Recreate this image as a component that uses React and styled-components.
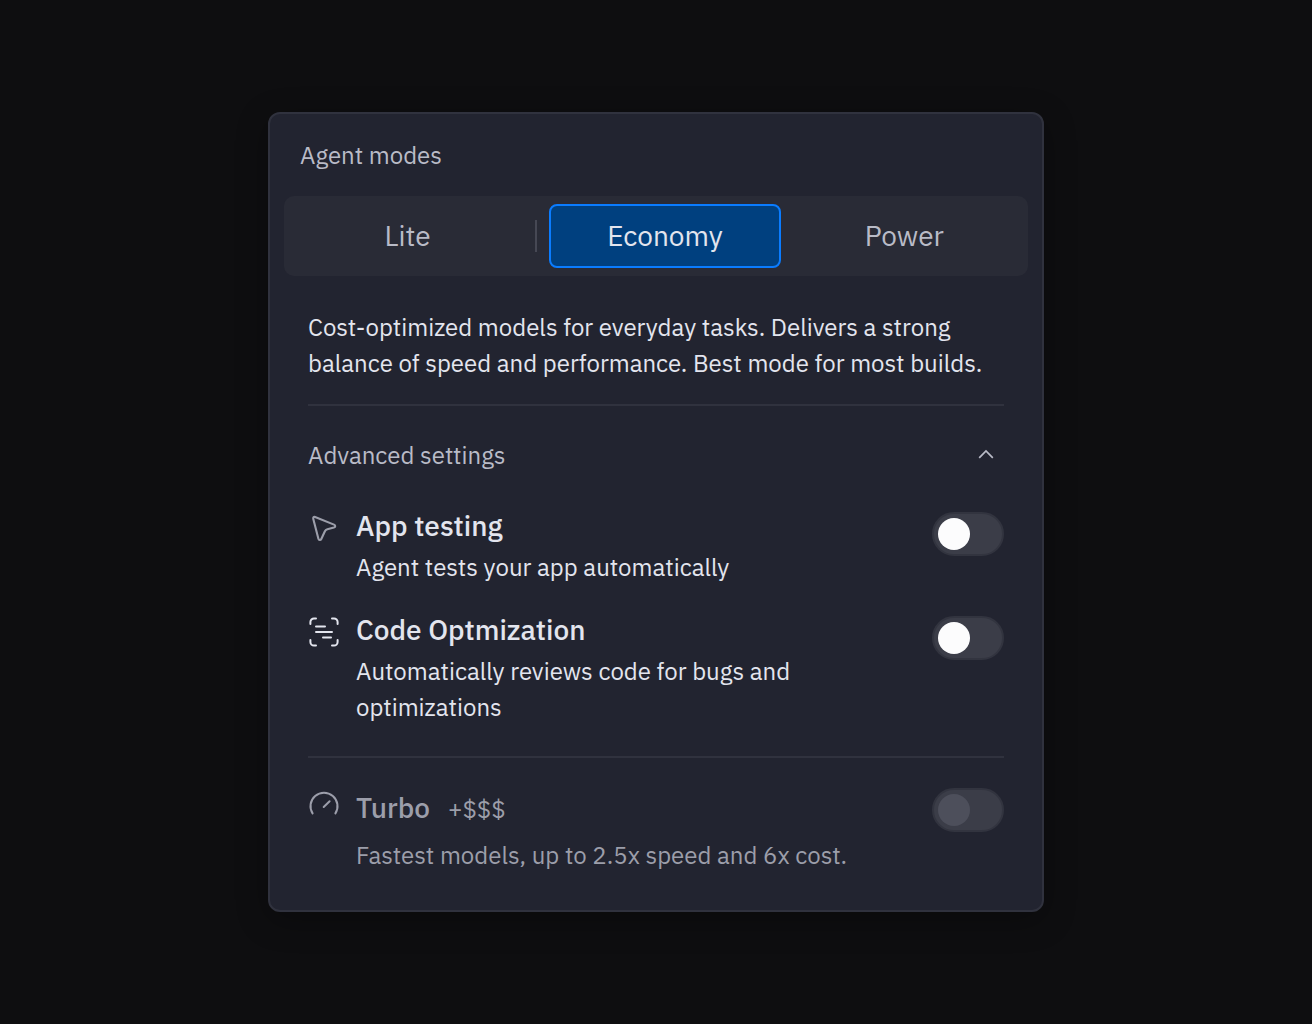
import React, { useState } from "react";
import styled, { createGlobalStyle } from "styled-components";

const GlobalStyle = createGlobalStyle`
  * {
    box-sizing: border-box;
  }

  body {
    margin: 0;
    background: #0e0e10;
    color: #e3e5ee;
    font-family: "IBM Plex Sans", Roboto, sans-serif;
    font-size: 24px;
    line-height: 36px;
  }

  h2, h3, p {
    margin: 0;
    font-size: inherit;
    font-weight: 400;
  }
`;

const Page = styled.main`
  display: flex;
  justify-content: center;
  padding: 112px 24px;
`;

const Card = styled.section`
  width: 100%;
  max-width: 776px;
  padding: 23px 14px 37px;
  background: #222430;
  border: 2px solid #30323e;
  border-radius: 12px;
  box-shadow: 0 8px 32px rgba(0, 0, 0, 0.3);
`;

const CardTitle = styled.h2`
  padding: 0 16px;
  color: #b9bbc7;
`;

const Segments = styled.div`
  display: flex;
  align-items: center;
  margin-top: 23px;
  padding: 8px;
  background: #292b36;
  border-radius: 10px;
`;

const Segment = styled.button`
  flex: 1 1 0;
  height: 64px;
  padding: 0;
  border: 2px solid ${(props) => (props.$active ? "#0a7cff" : "transparent")};
  border-radius: 8px;
  background: ${(props) => (props.$active ? "#00407f" : "transparent")};
  color: ${(props) => (props.$active ? "#e3e5ee" : "#b9bbc7")};
  font-family: inherit;
  font-size: 28px;
  line-height: 36px;
  cursor: pointer;
`;

const SegmentDivider = styled.span`
  width: 2px;
  height: 32px;
  margin: 0 12px;
  background: #464854;
`;

const SegmentGap = styled.span`
  width: 8px;
`;

const Content = styled.div`
  padding: 33px 24px 0;
`;

const Divider = styled.hr`
  height: 2px;
  margin: ${(props) => props.$top}px 0 0;
  border: 0;
  background: #30323e;
`;

const AdvancedButton = styled.button`
  display: flex;
  align-items: center;
  justify-content: space-between;
  width: 100%;
  margin-top: 31px;
  padding: 0 8px 0 0;
  border: 0;
  background: transparent;
  color: #b9bbc7;
  font: inherit;
  text-align: left;
  cursor: pointer;
`;

const Row = styled.div`
  display: grid;
  grid-template-columns: 32px minmax(0, 1fr) 72px;
  column-gap: 16px;
  margin-top: ${(props) => props.$top}px;
  color: ${(props) => (props.$muted ? "#9c9eaa" : "#e3e5ee")};
`;

const IconBox = styled.span`
  display: flex;
  height: 40px;
  align-items: center;
  color: ${(props) => props.$color};
`;

const RowText = styled.div`
  max-width: 500px;
`;

const RowTitle = styled.label`
  display: block;
  padding-top: ${(props) => (props.$roomy ? 6 : 0)}px;
  margin-bottom: ${(props) => (props.$roomy ? 10 : 5)}px;
  font-size: 28px;
  font-weight: 500;
`;

const Price = styled.span`
  margin-left: 18px;
  font-size: 24px;
  font-weight: 400;
`;

const Switch = styled.input`
  appearance: none;
  display: block;
  width: 72px;
  height: 44px;
  margin: 4px 0 0;
  padding: 4px;
  border: 2px solid #32343f;
  border-radius: 22px;
  background: #3b3d48;
  cursor: pointer;

  &::before {
    content: "";
    display: block;
    width: 32px;
    height: 32px;
    border-radius: 50%;
    background: #fcfcfd;
  }

  &:checked {
    background: #0a7cff;
  }

  &:checked::before {
    margin-left: 28px;
  }

  &:disabled {
    cursor: default;
  }

  &:disabled::before {
    background: #4d4f5b;
  }
`;

const CursorIcon = () => (
  <svg width="32" height="32" viewBox="0 0 32 32" fill="none" stroke="currentColor" strokeWidth="2.1" strokeLinejoin="round">
    <path d="M7.1 5L26 12.6C27.7 13.3 27.6 15 25.9 15.5L19.4 17.2C18.2 17.6 17.4 18.2 16.9 19.3L13.3 27C12.6 28.5 10.8 28.4 10.4 26.7L5.3 7C4.9 5.5 5.7 4.5 7.1 5Z" />
  </svg>
);

const ScanIcon = () => (
  <svg width="32" height="32" viewBox="0 0 32 32" fill="none" stroke="currentColor" strokeWidth="2" strokeLinecap="round">
    <path d="M2.4 8V6a3.6 3.6 0 0 1 3.6-3.6h2M24 2.4h2a3.6 3.6 0 0 1 3.6 3.6v2M29.6 24v2a3.6 3.6 0 0 1-3.6 3.6h-2M8 29.6H6a3.6 3.6 0 0 1-3.6-3.6v-2" />
    <path d="M8 10.6h9M8 16h16M15 21.4h8" />
  </svg>
);

const GaugeIcon = () => (
  <svg width="32" height="32" viewBox="0 0 32 32" fill="none" stroke="currentColor" strokeWidth="2" strokeLinecap="round">
    <path d="M4.6 25.4A13.5 13.5 0 1 1 27.4 25.4" />
    <path d="M15.7 19L21.6 13.2" />
  </svg>
);

const ChevronIcon = ({ open }) => (
  <svg width="20" height="20" viewBox="0 0 20 20" fill="none" stroke="currentColor" strokeWidth="1.7">
    <path d={open ? "M3.2 12.8L10 6L16.8 12.8" : "M3.2 6L10 12.8L16.8 6"} />
  </svg>
);

const Setting = ({ id, icon, iconColor, title, desc, top, muted, price }) => {
  const [on, setOn] = useState(false);

  return (
    <Row $top={top} $muted={muted}>
      <IconBox $color={iconColor}>{icon}</IconBox>
      <RowText>
        <RowTitle htmlFor={id} $roomy={!!price}>
          {title}
          {price && <Price>{price}</Price>}
        </RowTitle>
        <p>{desc}</p>
      </RowText>
      <Switch
        id={id}
        type="checkbox"
        role="switch"
        checked={on}
        disabled={muted}
        onChange={(e) => setOn(e.target.checked)}
      />
    </Row>
  );
};

export default function App() {
  const [mode, setMode] = useState("Economy");
  const [open, setOpen] = useState(true);

  const renderSegment = (name) => (
    <Segment type="button" $active={mode === name} aria-pressed={mode === name} onClick={() => setMode(name)}>
      {name}
    </Segment>
  );

  return (
    <>
      <GlobalStyle />
      <Page>
        <Card>
          <CardTitle>Agent modes</CardTitle>
          <Segments>
            {renderSegment("Lite")}
            <SegmentDivider />
            {renderSegment("Economy")}
            <SegmentGap />
            {renderSegment("Power")}
          </Segments>
          <Content>
            <p>
              Cost-optimized models for everyday tasks. Delivers a strong balance of speed and
              performance. Best mode for most builds.
            </p>
            <Divider $top={23} />
            <AdvancedButton type="button" aria-expanded={open} onClick={() => setOpen(!open)}>
              Advanced settings
              <ChevronIcon open={open} />
            </AdvancedButton>
            {open && (
              <>
                <Setting
                  id="app-testing"
                  top={35}
                  icon={<CursorIcon />}
                  iconColor="#9c9eaa"
                  title="App testing"
                  desc="Agent tests your app automatically"
                />
                <Setting
                  id="code-optimization"
                  top={27}
                  icon={<ScanIcon />}
                  iconColor="#e3e5ee"
                  title="Code Optmization"
                  desc="Automatically reviews code for bugs and optimizations"
                />
              </>
            )}
            <Divider $top={31} />
            <Setting
              id="turbo"
              top={26}
              icon={<GaugeIcon />}
              iconColor="#9c9eaa"
              title="Turbo"
              price="+$$$"
              desc="Fastest models, up to 2.5x speed and 6x cost."
              muted
            />
          </Content>
        </Card>
      </Page>
    </>
  );
}
